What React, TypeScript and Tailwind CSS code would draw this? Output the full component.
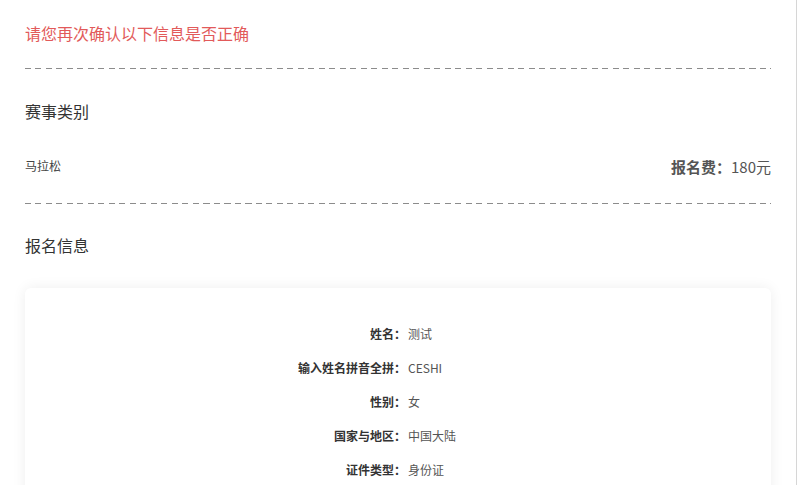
import React from "react";

const rows: { label: string; value: string }[] = [
  { label: "姓名：", value: "测试" },
  { label: "输入姓名拼音全拼：", value: "CESHI" },
  { label: "性别：", value: "女" },
  { label: "国家与地区：", value: "中国大陆" },
  { label: "证件类型：", value: "身份证" },
];

const Dashed: React.FC = () => (
  <div className="h-px w-full bg-[repeating-linear-gradient(to_right,#8c8c8c_0_6px,transparent_6px_10.5px)]" />
);

const App: React.FC = () => {
  return (
    <div className="h-[485px] w-[797px] overflow-hidden border-r border-[#d6d6d6] bg-white px-[25px] pt-[21px] font-['Noto_Sans_CJK_SC','Noto_Sans',sans-serif] text-[#333]">
      {/* notice */}
      <div className="text-[16px] leading-6 text-[#e25a5a]">请您再次确认以下信息是否正确</div>
      <div className="mt-[23px]">
        <Dashed />
      </div>

      {/* race type */}
      <div className="mt-[30px] text-[16px] leading-6">赛事类别</div>
      <div className="mt-[31px] flex h-6 items-center justify-between">
        <span className="text-[12px] text-[#444]">马拉松</span>
        <span className="pt-[3px] text-[15px] text-[#555]">
          <b className="font-bold">报名费：</b>180元
        </span>
      </div>
      <div className="mt-[25px]">
        <Dashed />
      </div>

      {/* sign up info */}
      <div className="mt-[29px] text-[16px] leading-6">报名信息</div>
      <div className="mt-[31px] rounded-md bg-white pt-[29px] pb-10 shadow-[0_0_14px_rgba(0,0,0,0.07)]">
        {rows.map((r) => (
          <div key={r.label} className="flex h-[34px] items-center text-[12px]">
            <div className="w-[381px] text-right font-bold text-[#333]">{r.label}</div>
            <div className="pl-[2px] text-[#555]">{r.value}</div>
          </div>
        ))}
      </div>
    </div>
  );
};

export default App;
